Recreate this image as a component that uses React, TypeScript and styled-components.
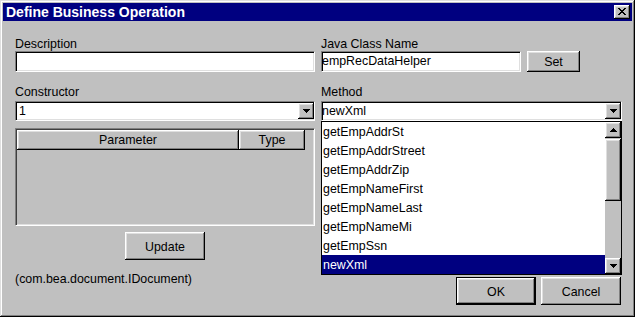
import React from "react";
import styled, { createGlobalStyle, css } from "styled-components";

const GlobalStyle = createGlobalStyle`
  html, body { margin: 0; padding: 0; background: #c0c0c0; }
  body {
    font-family: "Liberation Sans", Arial, sans-serif;
    font-size: 12.4px;
    color: #000;
  }
  * { box-sizing: border-box; }
`;

const raisedBevel = css`
  background: #c0c0c0;
  box-shadow: inset -1px -1px #000, inset 1px 1px #fff, inset -2px -2px #808080,
    inset 2px 2px #dfdfdf;
`;

const sunkenBevel = css`
  background: #fff;
  border-top: 1px solid #808080;
  border-left: 1px solid #808080;
  border-bottom: 1px solid #fff;
  border-right: 1px solid #fff;
  box-shadow: inset 1px 1px #000, inset -1px -1px #dfdfdf;
`;

const Window = styled.div`
  width: 635px;
  height: 317px;
  padding: 3px;
  background: #c0c0c0;
  display: flex;
  flex-direction: column;
  box-shadow: inset -1px -1px #000, inset 1px 1px #dfdfdf, inset -2px -2px #808080,
    inset 2px 2px #fff;
`;

const TitleBar = styled.div`
  height: 18px;
  background: #000080;
  display: flex;
  align-items: center;
  justify-content: space-between;
  padding: 0 2px 0 3px;
`;

const Title = styled.span`
  color: #fff;
  font-weight: bold;
  font-size: 14px;
  line-height: 18px;
  white-space: nowrap;
`;

const CloseButton = styled.div`
  ${raisedBevel};
  width: 16px;
  height: 14px;
  display: flex;
  align-items: center;
  justify-content: center;
  padding-bottom: 1px;
`;

const Content = styled.div`
  flex: 1;
  display: grid;
  grid-template-columns: 300px 301px;
  column-gap: 6px;
  padding: 16px 0 9px 12px;
`;

const Column = styled.div`
  display: flex;
  flex-direction: column;
  min-height: 0;
`;

const Field = styled.div<{ $gap?: number }>`
  display: flex;
  flex-direction: column;
  margin-top: ${(p) => p.$gap ?? 0}px;
`;

const Label = styled.div<{ $space?: number }>`
  line-height: 14px;
  height: 14px;
  margin-bottom: ${(p) => p.$space ?? 0}px;
  white-space: nowrap;
`;

const TextInput = styled.div<{ $width?: number }>`
  ${sunkenBevel};
  height: 21px;
  width: ${(p) => (p.$width ? `${p.$width}px` : "100%")};
  line-height: 18px;
  padding-left: 0;
  white-space: nowrap;
  overflow: hidden;
`;

const InputRow = styled.div`
  display: flex;
  gap: 6px;
`;

const Combo = styled.div<{ $inset: number }>`
  ${sunkenBevel};
  position: relative;
  height: 20px;
  display: flex;
  align-items: center;
  padding-left: ${(p) => p.$inset}px;
`;

const ComboText = styled.span`
  flex: 1;
  line-height: 17px;
  padding-top: 1px;
  white-space: nowrap;
`;

const ArrowButton = styled.div`
  ${raisedBevel};
  width: 16px;
  height: 16px;
  display: flex;
  align-items: center;
  justify-content: center;
  flex: none;
`;

const DropList = styled.div`
  position: absolute;
  top: 19px;
  left: -1px;
  width: 301px;
  height: 154px;
  border: 1px solid #000;
  background: #fff;
  display: flex;
  z-index: 2;
`;

const Items = styled.div`
  flex: 1;
  display: flex;
  flex-direction: column;
`;

const Item = styled.div<{ $selected?: boolean }>`
  height: 19px;
  line-height: 20px;
  padding-left: 1px;
  white-space: nowrap;
  background: ${(p) => (p.$selected ? "#000080" : "#fff")};
  color: ${(p) => (p.$selected ? "#fff" : "#000")};
`;

const ScrollBar = styled.div`
  width: 16px;
  display: flex;
  flex-direction: column;
  background: #c0c0c0;
`;

const ScrollThumb = styled.div`
  ${raisedBevel};
  height: 62px;
  margin-top: 1px;
`;

const ScrollTrack = styled.div`
  flex: 1;
`;

const TableBox = styled.div`
  margin-top: 7px;
  height: 98px;
  background: #c0c0c0;
  border-top: 1px solid #808080;
  border-left: 1px solid #808080;
  border-bottom: 1px solid #fff;
  border-right: 1px solid #fff;
  box-shadow: inset 1px 1px #404040, inset -1px -1px #dfdfdf;
  padding: 1px;
`;

const HeaderRow = styled.div`
  display: flex;
`;

const HeaderCell = styled.div<{ $width: number }>`
  ${raisedBevel};
  width: ${(p) => p.$width}px;
  height: 20px;
  line-height: 21px;
  text-align: center;
`;

const Button = styled.div<{ $width: number; $height: number; $default?: boolean }>`
  ${raisedBevel};
  width: ${(p) => p.$width}px;
  height: ${(p) => p.$height}px;
  display: flex;
  align-items: center;
  justify-content: center;
  padding-top: 1px;
  flex: none;
  ${(p) =>
    p.$default &&
    css`
      box-shadow: inset 0 0 0 1px #000, inset -2px -2px #000, inset 2px 2px #fff,
        inset -3px -3px #808080, inset 3px 3px #dfdfdf;
    `}
`;

const UpdateButton = styled(Button)`
  align-self: center;
  margin-top: 6px;
`;

const Note = styled.div`
  margin-top: 12px;
  line-height: 14px;
  white-space: nowrap;
`;

const ButtonRow = styled.div`
  margin-top: auto;
  display: flex;
  justify-content: flex-end;
  gap: 5px;
  padding-right: 1px;
`;

const CloseIcon = () => (
  <svg width="8" height="7" viewBox="0 0 8 7" shapeRendering="crispEdges">
    <path
      fill="#000"
      d="M0 0h2v1H0zM6 0h2v1H6zM1 1h2v1H1zM5 1h2v1H5zM2 2h4v1H2zM3 3h2v1H3zM2 4h4v1H2zM1 5h2v1H1zM5 5h2v1H5zM0 6h2v1H0zM6 6h2v1H6z"
    />
  </svg>
);

const Triangle = ({ up }: { up?: boolean }) => (
  <svg width="7" height="4" viewBox="0 0 7 4" shapeRendering="crispEdges">
    <path
      fill="#000"
      d={up ? "M3 0h1v1H3zM2 1h3v1H2zM1 2h5v1H1zM0 3h7v1H0z" : "M0 0h7v1H0zM1 1h5v1H1zM2 2h3v1H2zM3 3h1v1H3z"}
    />
  </svg>
);

const methods = [
  "getEmpAddrSt",
  "getEmpAddrStreet",
  "getEmpAddrZip",
  "getEmpNameFirst",
  "getEmpNameLast",
  "getEmpNameMi",
  "getEmpSsn",
  "newXml",
];

export default function App() {
  return (
    <>
      <GlobalStyle />
      <Window>
        <TitleBar>
          <Title>Define Business Operation</Title>
          <CloseButton>
            <CloseIcon />
          </CloseButton>
        </TitleBar>
        <Content>
          <Column>
            <Field>
              <Label>Description</Label>
              <TextInput />
            </Field>
            <Field $gap={13}>
              <Label $space={2}>Constructor</Label>
              <Combo $inset={3}>
                <ComboText>1</ComboText>
                <ArrowButton>
                  <Triangle />
                </ArrowButton>
              </Combo>
            </Field>
            <TableBox>
              <HeaderRow>
                <HeaderCell $width={222}>Parameter</HeaderCell>
                <HeaderCell $width={66}>Type</HeaderCell>
              </HeaderRow>
            </TableBox>
            <UpdateButton $width={80} $height={28}>
              Update
            </UpdateButton>
            <Note>(com.bea.document.IDocument)</Note>
          </Column>
          <Column>
            <Field>
              <Label>Java Class Name</Label>
              <InputRow>
                <TextInput $width={200}>empRecDataHelper</TextInput>
                <Button $width={53} $height={21}>
                  Set
                </Button>
              </InputRow>
            </Field>
            <Field $gap={13}>
              <Label $space={2}>Method</Label>
              <Combo $inset={0}>
                <ComboText>newXml</ComboText>
                <ArrowButton>
                  <Triangle />
                </ArrowButton>
                <DropList>
                  <Items>
                    {methods.map((m) => (
                      <Item key={m} $selected={m === "newXml"}>
                        {m}
                      </Item>
                    ))}
                  </Items>
                  <ScrollBar>
                    <ArrowButton>
                      <Triangle up />
                    </ArrowButton>
                    <ScrollThumb />
                    <ScrollTrack />
                    <ArrowButton>
                      <Triangle />
                    </ArrowButton>
                  </ScrollBar>
                </DropList>
              </Combo>
            </Field>
            <ButtonRow>
              <Button $width={80} $height={28} $default>
                OK
              </Button>
              <Button $width={80} $height={28}>
                Cancel
              </Button>
            </ButtonRow>
          </Column>
        </Content>
      </Window>
    </>
  );
}
